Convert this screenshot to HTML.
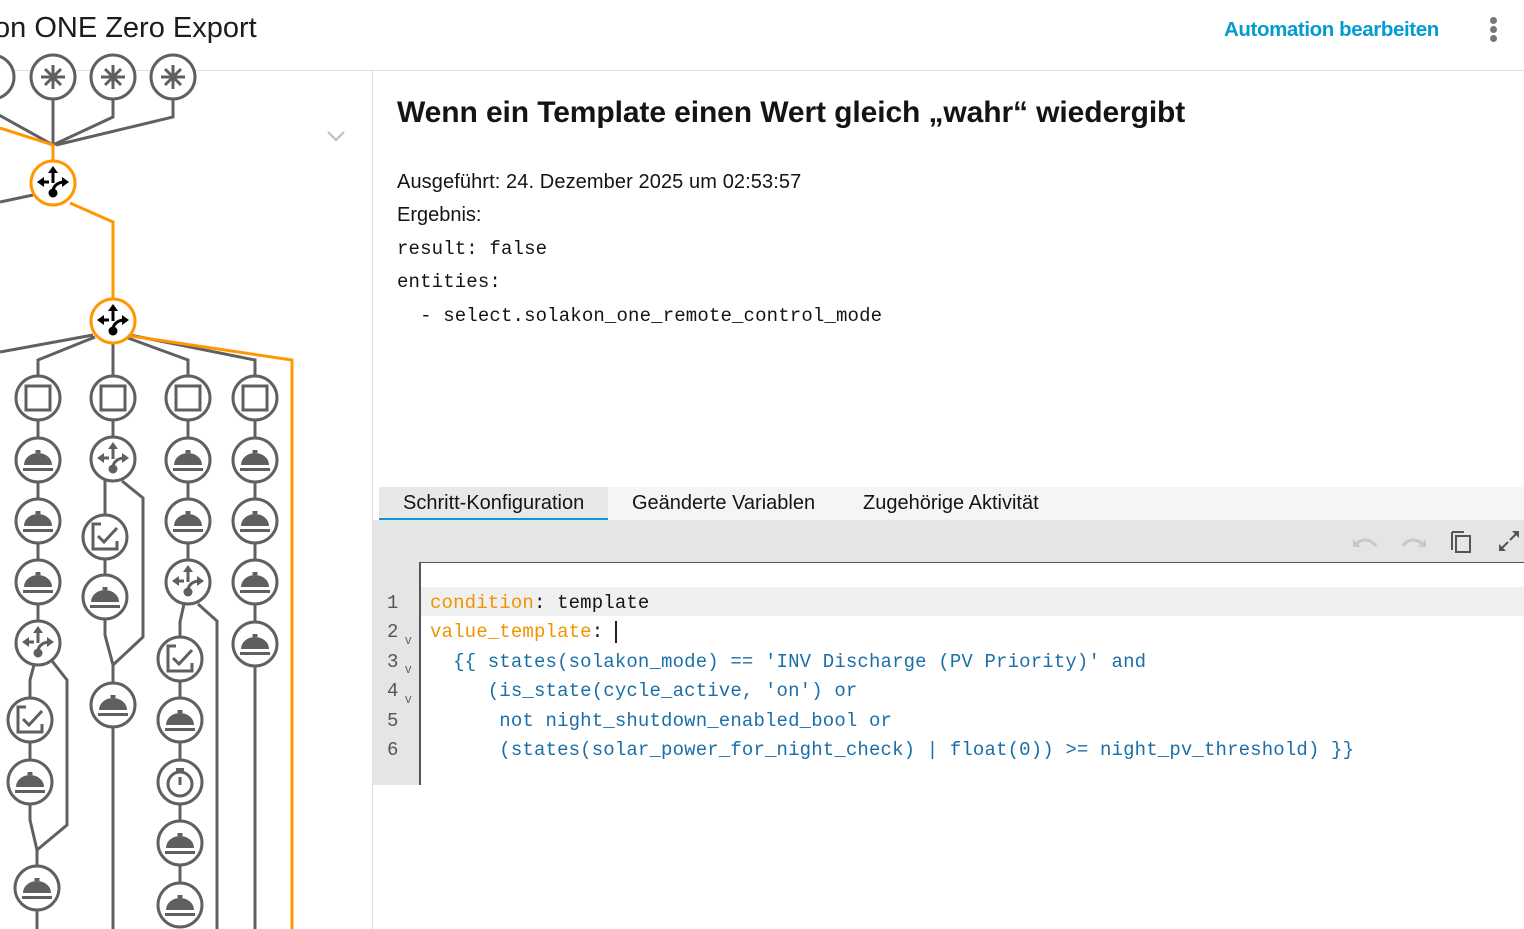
<!DOCTYPE html>
<html><head><meta charset="utf-8"><style>
*{margin:0;padding:0;box-sizing:border-box}
body{width:1524px;height:929px;overflow:hidden;background:#fff;font-family:"Liberation Sans",sans-serif;color:#141414;position:relative}
.abs{position:absolute;white-space:pre}
.mono{font-family:"Liberation Mono",monospace;font-size:19px;letter-spacing:0.15px}
.k{color:#f29300}.b{color:#1a6fa8}
</style></head><body>
<div class="abs" style="left:-6px;top:12px;font-size:29px;color:#1c1c1c">on ONE Zero Export</div>
<div class="abs" style="left:1224px;top:18px;font-size:20.5px;color:#039bd0;font-weight:bold;letter-spacing:-0.4px">Automation bearbeiten</div>
<div style="position:absolute;left:1490px;top:17px;width:7px;height:7px;border-radius:50%;background:#777"></div>
<div style="position:absolute;left:1490px;top:26px;width:7px;height:7px;border-radius:50%;background:#777"></div>
<div style="position:absolute;left:1490px;top:35px;width:7px;height:7px;border-radius:50%;background:#777"></div>
<div style="position:absolute;left:0;top:70px;width:1524px;height:1px;background:#e0e0e0"></div>
<div style="position:absolute;left:372px;top:70px;width:1px;height:859px;background:#e0e0e0"></div>

<svg style="position:absolute;left:0;top:0" width="372" height="929" viewBox="0 0 372 929">
<defs>
<g id="c"><circle r="22" fill="#fff" stroke="#606060" stroke-width="3"/></g>
<g id="bell"><use href="#c"/><path d="M-14 5 A14 12 0 0 1 14 5 Z" fill="#5f5f5f"/><rect x="-2.5" y="-10" width="5" height="3" fill="#5f5f5f"/><rect x="-15" y="8" width="30" height="3" fill="#5f5f5f"/></g>
<g id="sq"><use href="#c"/><rect x="-12" y="-12" width="24" height="24" fill="none" stroke="#5f5f5f" stroke-width="3"/></g>
<g id="chk"><use href="#c"/><path d="M-4 -13 H-12 V12 H12 V4" fill="none" stroke="#5f5f5f" stroke-width="3"/><path d="M-7 -1 L-1 5 L12 -9" fill="none" stroke="#5f5f5f" stroke-width="3"/></g>
<g id="tim"><use href="#c"/><circle r="12" cy="2" fill="none" stroke="#5f5f5f" stroke-width="3"/><rect x="-1.5" y="-5" width="3" height="8" fill="#5f5f5f"/><rect x="-4" y="-14" width="8" height="3" fill="#5f5f5f"/></g>
<g id="br"><use href="#c"/><g fill="none" stroke="#5f5f5f" stroke-width="3"><path d="M0 -12 V0 M-12 -1 H-4 M12 -1 C6 -1 0 2 0 9"/></g><path d="M0 -17 L-5 -10 H5Z M-16 -1 L-9 -6 V4Z M16 -1 L9 -6 V4Z" fill="#5f5f5f"/><circle cy="10" r="4.5" fill="#5f5f5f"/></g>
<g id="brO"><circle r="22" fill="#fff" stroke="#ff9800" stroke-width="3"/><g fill="none" stroke="#000" stroke-width="3"><path d="M0 -12 V0 M-12 -1 H-4 M12 -1 C6 -1 0 2 0 9"/></g><path d="M0 -17 L-5 -10 H5Z M-16 -1 L-9 -6 V4Z M16 -1 L9 -6 V4Z" fill="#000"/><circle cy="10" r="4.5" fill="#000"/></g>
<g id="star"><use href="#c"/><path d="M0 -12V12M-12 0H12M-8 -8L8 8M-8 8L8 -8" stroke="#5f5f5f" stroke-width="3"/></g>
</defs>
<g fill="none" stroke="#606060" stroke-width="3">
<path d="M53 100V145M113 100V117L53 145M173 100V117L56 145M-10 110 L53 145"/>
<path d="M0 202 L33 195"/>
<path d="M0 352 L93 335M38 375V360L95 337M113 343V375M188 375V360L128 338M255 375V360L130 335"/>
<path d="M38 420V438M38 482V499M38 543V560M38 604V621"/>
<path d="M34 665 L30 680V698M30 742V760M30 804V820L37 850V866M52 661L67 680V825L37 850M37 910V929"/>
<path d="M113 420V437M105 480 L105 498V515M105 559V575M105 619V635L113 665V683M122 481L143 498V637L113 665M113 727V929"/>
<path d="M188 420V438M188 482V499M188 543V560M184 604L180 622V637M180 681V698M180 742V760M180 804V821M180 865V883M198 604L217 621V929"/>
<path d="M255 420V438M255 482V499M255 543V560M255 604V622M255 666V929"/>
</g>
<g fill="none" stroke="#ff9800" stroke-width="3">
<path d="M0 128 L53 145 V162"/>
<path d="M70 203 L113 222 V299"/>
<path d="M131 336 L292 360 V929"/>
</g>
<use href="#c" x="-8" y="77"/><use href="#star" x="53" y="77"/><use href="#star" x="113" y="77"/><use href="#star" x="173" y="77"/>
<use href="#brO" x="53" y="183"/><use href="#brO" x="113" y="321"/>
<use href="#sq" x="38" y="398"/><use href="#bell" x="38" y="460"/><use href="#bell" x="38" y="521"/><use href="#bell" x="38" y="582"/><use href="#br" x="38" y="643"/><use href="#chk" x="30" y="720"/><use href="#bell" x="30" y="782"/><use href="#bell" x="37" y="888"/>
<use href="#sq" x="113" y="398"/><use href="#br" x="113" y="459"/><use href="#chk" x="105" y="537"/><use href="#bell" x="105" y="597"/><use href="#bell" x="113" y="705"/>
<use href="#sq" x="188" y="398"/><use href="#bell" x="188" y="460"/><use href="#bell" x="188" y="521"/><use href="#br" x="188" y="582"/><use href="#chk" x="180" y="659"/><use href="#bell" x="180" y="720"/><use href="#tim" x="180" y="782"/><use href="#bell" x="180" y="843"/><use href="#bell" x="180" y="905"/>
<use href="#sq" x="255" y="398"/><use href="#bell" x="255" y="460"/><use href="#bell" x="255" y="521"/><use href="#bell" x="255" y="582"/><use href="#bell" x="255" y="644"/>
<path d="M328 132 L336 140 L344 132" fill="none" stroke="#bbb" stroke-width="2"/>
</svg>

<div class="abs" style="left:397px;top:96px;font-size:30px;font-weight:bold;letter-spacing:-0.1px">Wenn ein Template einen Wert gleich „wahr“ wiedergibt</div>
<div class="abs" style="left:397px;top:171px;font-size:20px;letter-spacing:0.1px">Ausgeführt: 24. Dezember 2025 um 02:53:57</div>
<div class="abs" style="left:397px;top:204px;font-size:20px">Ergebnis:</div>
<div class="abs mono" style="left:397px;top:238px">result: false</div>
<div class="abs mono" style="left:397px;top:271px">entities:</div>
<div class="abs mono" style="left:397px;top:305px">  - select.solakon_one_remote_control_mode</div>

<div style="position:absolute;left:379px;top:487px;width:1145px;height:33px;background:#f5f5f5"></div>
<div style="position:absolute;left:379px;top:487px;width:229px;height:33px;background:#e8e8e8;border-bottom:2px solid #039bd0"></div>
<div class="abs" style="left:403px;top:492px;font-size:20px">Schritt-Konfiguration</div>
<div class="abs" style="left:632px;top:492px;font-size:20px">Geänderte Variablen</div>
<div class="abs" style="left:863px;top:492px;font-size:20px">Zugehörige Aktivität</div>
<div style="position:absolute;left:373px;top:520px;width:1151px;height:265px;background:#e5e5e5"></div>
<div style="position:absolute;left:419px;top:562px;width:1105px;height:223px;background:#fff;border-left:2px solid #555;border-top:1px solid #555"></div>
<div style="position:absolute;left:421px;top:587px;width:1103px;height:29px;background:#f0f0f0"></div>
<svg style="position:absolute;left:1340px;top:525px" width="184" height="35">
<path d="M15 21 C20 13 30 13 36 21" fill="none" stroke="#c8c8c8" stroke-width="3"/><path d="M13 14 V22 H21Z" fill="#c8c8c8"/>
<path d="M63 21 C68 13 78 13 84 21" fill="none" stroke="#c8c8c8" stroke-width="3"/><path d="M86 14 V22 H78Z" fill="#c8c8c8"/>
<path d="M112 7 V25 M112 7 H124" fill="none" stroke="#555" stroke-width="2"/><rect x="116" y="11" width="14" height="16" fill="none" stroke="#555" stroke-width="2"/>
<path d="M160 25 L168 17 M170 15 L178 7" stroke="#555" stroke-width="2"/><path d="M159 26 V19 L166 26Z M179 6 V13 L172 6Z" fill="#555"/>
</svg>
<div class="abs mono" style="left:387px;top:589px;line-height:29.4px;color:#555">1
2
3
4
5
6</div>
<div class="abs" style="left:405px;top:625px;line-height:29.4px;color:#666;font-size:13px;font-family:'Liberation Sans',sans-serif">v
v
v</div>
<div class="abs mono" style="left:430px;top:589px;line-height:29.4px"><span class="k">condition</span>: template
<span class="k">value_template</span>: <span style="border-left:2px solid #222"></span>
<span class="b">  {{ states(solakon_mode) == 'INV Discharge (PV Priority)' and</span>
<span class="b">     (is_state(cycle_active, 'on') or</span>
<span class="b">      not night_shutdown_enabled_bool or</span>
<span class="b">      (states(solar_power_for_night_check) | float(0)) &gt;= night_pv_threshold) }}</span></div>
</body></html>
